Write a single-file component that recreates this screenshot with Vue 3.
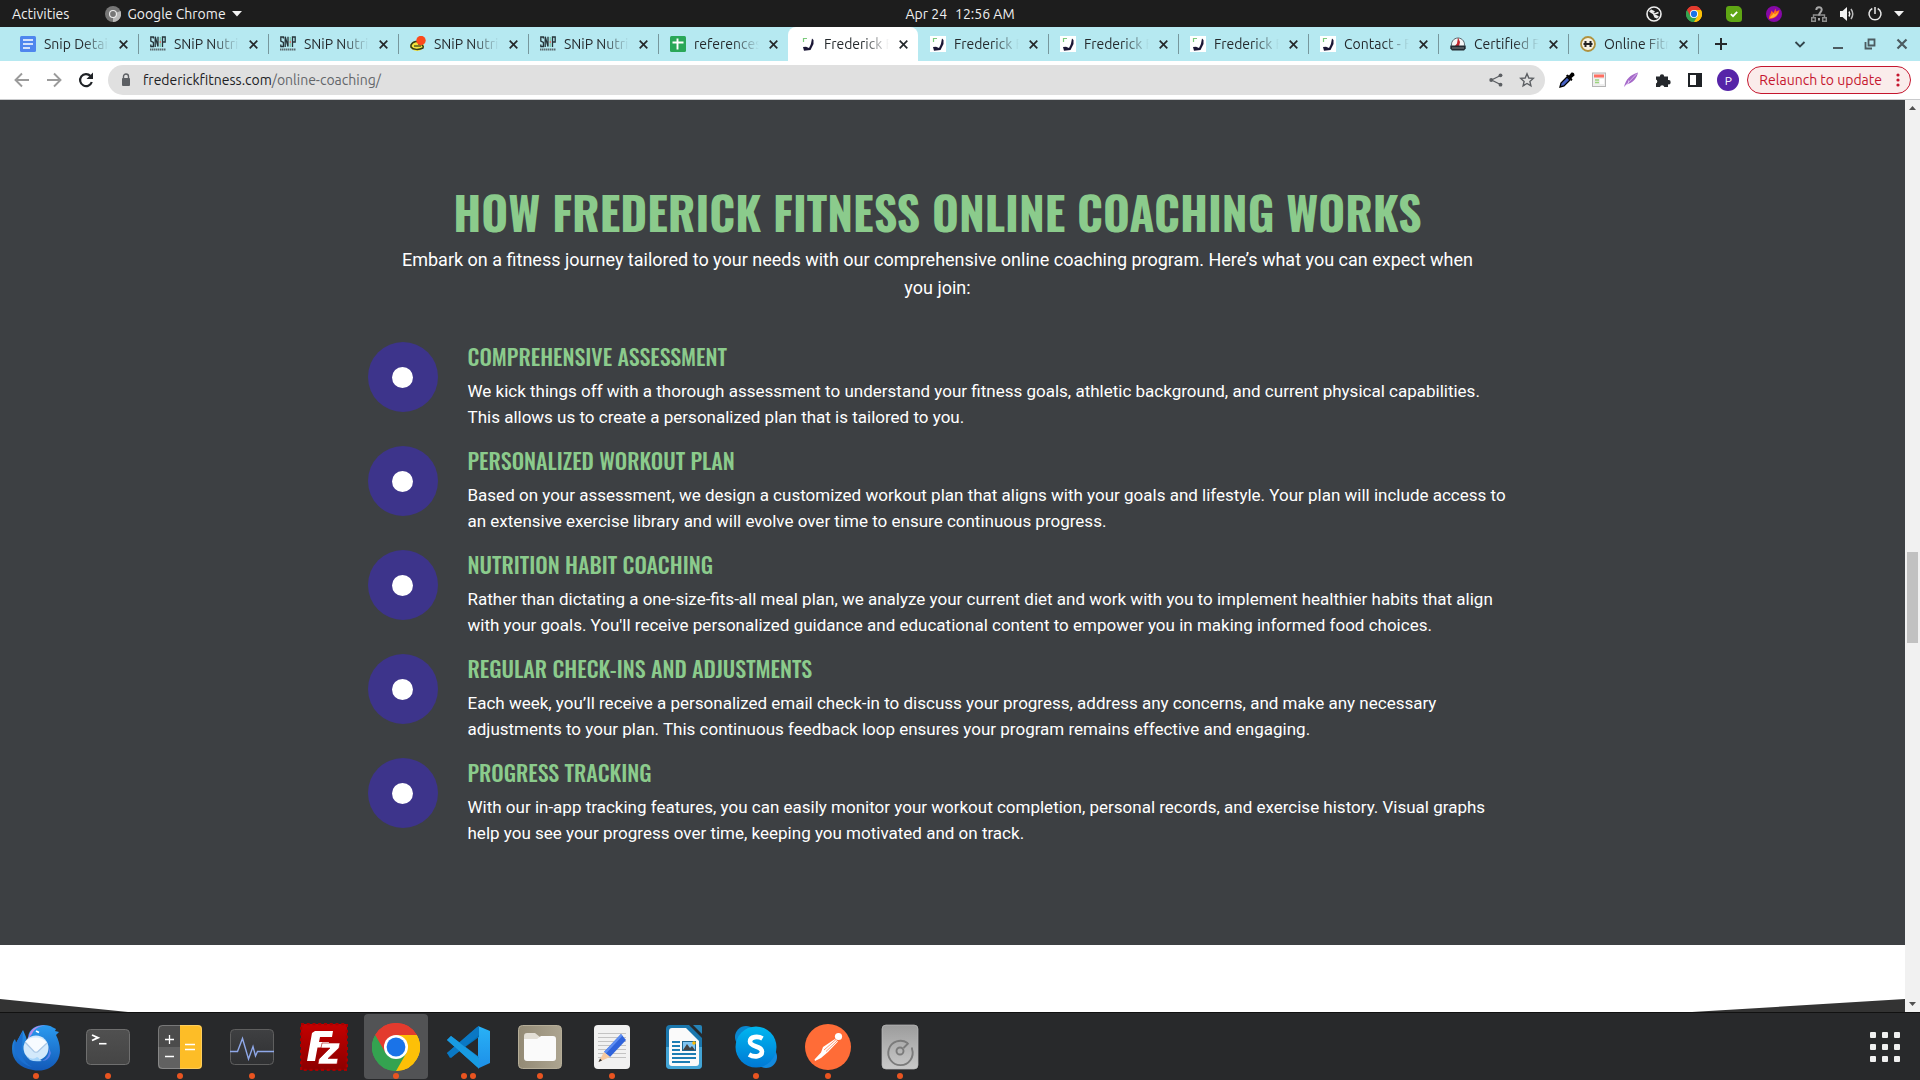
<script setup>
const tabs = [
  { t: 'Snip Details', k: 'docs' },
  { t: 'SNiP Nutrition', k: 'snip' },
  { t: 'SNiP Nutrition', k: 'snip' },
  { t: 'SNiP Nutrition', k: 'hat' },
  { t: 'SNiP Nutrition', k: 'snip' },
  { t: 'references', k: 'sheets' },
  { t: 'Frederick Fit', k: 'fred', on: true },
  { t: 'Frederick Fit', k: 'fred' },
  { t: 'Frederick Fit', k: 'fred' },
  { t: 'Frederick Fit', k: 'fred' },
  { t: 'Contact - Fre', k: 'fred' },
  { t: 'Certified Fit', k: 'cert' },
  { t: 'Online Fitness', k: 'gym' },
]
const items = [
  ['COMPREHENSIVE ASSESSMENT', 'We kick things off with a thorough assessment to understand your fitness goals, athletic background, and current physical capabilities. This allows us to create a personalized plan that is tailored to you.'],
  ['PERSONALIZED WORKOUT PLAN', 'Based on your assessment, we design a customized workout plan that aligns with your goals and lifestyle. Your plan will include access to an extensive exercise library and will evolve over time to ensure continuous progress.'],
  ['NUTRITION HABIT COACHING', "Rather than dictating a one-size-fits-all meal plan, we analyze your current diet and work with you to implement healthier habits that align with your goals. You'll receive personalized guidance and educational content to empower you in making informed food choices."],
  ['REGULAR CHECK-INS AND ADJUSTMENTS', 'Each week, you’ll receive a personalized email check-in to discuss your progress, address any concerns, and make any necessary adjustments to your plan. This continuous feedback loop ensures your program remains effective and engaging.'],
  ['PROGRESS TRACKING', 'With our in-app tracking features, you can easily monitor your workout completion, personal records, and exercise history. Visual graphs help you see your progress over time, keeping you motivated and on track.'],
]
const apps = [
  { k: 'bird', dots: 1, name: 'Thunderbird' },
  { k: 'term', dots: 1, name: 'Terminal' },
  { k: 'calc', dots: 1, name: 'Calculator' },
  { k: 'mon', dots: 1, name: 'System Monitor' },
  { k: 'fz', dots: 0, name: 'FileZilla' },
  { k: 'chrome', dots: 1, on: true, name: 'Google Chrome' },
  { k: 'code', dots: 2, name: 'Visual Studio Code' },
  { k: 'files', dots: 1, name: 'Files' },
  { k: 'edit', dots: 1, name: 'Text Editor' },
  { k: 'writer', dots: 0, name: 'LibreOffice Writer' },
  { k: 'skype', dots: 1, name: 'Skype' },
  { k: 'postman', dots: 1, name: 'Postman' },
  { k: 'disk', dots: 1, name: 'Disk' },
]
</script>

<template>
  <div class="desktop">
    <svg class="defs" width="0" height="0" aria-hidden="true">
      <defs>
        <linearGradient id="gBird" x1="0" y1="0" x2="0" y2="1"><stop offset="0" stop-color="#2b9bf0" /><stop offset="1" stop-color="#1259b8" /></linearGradient>
        <linearGradient id="gDark" x1="0" y1="0" x2="0" y2="1"><stop offset="0" stop-color="#505050" /><stop offset="1" stop-color="#454545" /></linearGradient>
        <linearGradient id="gMon" x1="0" y1="0" x2="0" y2="1"><stop offset="0" stop-color="#3f4042" /><stop offset="1" stop-color="#2f3032" /></linearGradient>
        <linearGradient id="gFz" x1="0" y1="0" x2="0" y2="1"><stop offset="0" stop-color="#c40000" /><stop offset="1" stop-color="#8c0000" /></linearGradient>
        <linearGradient id="gCode" x1="0" y1="0" x2="0" y2="1"><stop offset="0" stop-color="#29b2f6" /><stop offset="1" stop-color="#1d8fe8" /></linearGradient>
        <linearGradient id="gSky" x1="0" y1="0" x2="0" y2="1"><stop offset="0" stop-color="#00b7f0" /><stop offset="1" stop-color="#0078d4" /></linearGradient>
        <linearGradient id="gFile" x1="0" y1="0" x2="1" y2="0"><stop offset="0" stop-color="#938a75" /><stop offset="1" stop-color="#aca490" /></linearGradient>
        <linearGradient id="gDisk" x1="0" y1="0" x2="0" y2="1"><stop offset="0" stop-color="#9c9c9c" /><stop offset="1" stop-color="#c9c9c9" /></linearGradient>
        <symbol id="chrome" viewBox="0 0 48 48">
          <path d="M24 24 3.2 12A24 24 0 0 1 44.8 12z" fill="#e33b2e" />
          <path d="M24 24 44.8 12A24 24 0 0 1 24 48z" fill="#fdc007" />
          <path d="M24 24 24 48A24 24 0 0 1 3.2 12z" fill="#34a350" />
          <path d="M24 12H44.8A24 24 0 0 1 24 48L34.4 30z" fill="#fdc007" />
          <path d="M13.6 30 3.2 12A24 24 0 0 0 24 48L34.4 30z" fill="#34a350" />
          <path d="M24 12H44.8A24 24 0 0 0 3.2 12L13.6 30z" fill="#e33b2e" />
          <circle cx="24" cy="24" r="12" fill="#fff" /><circle cx="24" cy="24" r="9.4" fill="#1a73e8" />
        </symbol>
      </defs>
    </svg>

    <header class="topbar">
      <button class="activities">Activities</button>
      <button class="appmenu">
        <svg width="16" height="16" viewBox="0 0 16 16"><circle cx="8" cy="8" r="8" fill="#777" /><path d="M8 8 15.5 5A8 8 0 0 1 8 16z" fill="#b9b9b9" /><circle cx="8" cy="8" r="4" fill="#eee" /><circle cx="8" cy="8" r="2.9" fill="#777" /></svg>
        Google Chrome
        <svg width="10" height="6" viewBox="0 0 10 6"><path d="M0 0H10L5 5.500z" fill="#f2f2f2" /></svg>
      </button>
      <div class="clock"><span>Apr 24</span><span>12:56 AM</span></div>
      <div class="tray">
        <svg width="16" height="16" viewBox="0 0 16 16"><circle cx="8" cy="8" r="7" fill="none" stroke="#eee" stroke-width="1.600" /><path d="M3.500 5 7.500 7.500 9 11 11.500 12M4.500 4 8.500 6M7.500 8.500 12.500 6.500M8.500 9 12.500 11" stroke="#eee" stroke-width="1.500" fill="none" /></svg>
        <svg width="16" height="16"><use href="#chrome" /></svg>
        <svg width="16" height="16" viewBox="0 0 16 16"><path d="M3 0H11A5 5 0 0 1 16 5V13A3 3 0 0 1 13 16H5A5 5 0 0 1 0 11V3A3 3 0 0 1 3 0z" fill="#5fa614" /><path d="M4.800 8.200 7 10.200 11.200 5.800" stroke="#fff" stroke-width="1.700" fill="none" /></svg>
        <svg width="16" height="16" viewBox="0 0 16 16"><circle cx="8" cy="8" r="8" fill="#8708a8" /><path d="M3 13C3 9 5 8 5.500 4.500L7.500 7 9.500 2.500 10 5.500 13.500 4C13 9 9 13 3 13z" fill="#ff6a1a" /><path d="M4 12C5 9 7 9 7.500 7L9 8.500 12 6C11 10 8 12 4 12z" fill="#ffb62e" /></svg>
        <svg class="net" width="16" height="16" viewBox="0 0 16 16"><g fill="none" stroke="#8d8d8d" stroke-width="1.400"><path d="M.7 11.700H4.300V15.300H.7zM11.700 11.700H15.300V15.300H11.700zM2.500 11V9H13.500V11" /></g><path d="M5.300 4C5.300.3 10.700.3 10.700 3.800 10.700 6.300 8 6.300 8 9.500M8 12V14.500" fill="none" stroke="#a8a8a8" stroke-width="2" /></svg>
        <svg class="vol" width="16" height="16" viewBox="0 0 16 16"><path d="M1 5H3.500L8 1V15L3.500 11H1z" fill="#f2f2f2" /><path d="M10 5.500Q11.500 8 10 10.500" stroke="#f2f2f2" stroke-width="1.500" fill="none" /><path d="M12 3Q15.500 8 12 13" stroke="#bbb" stroke-width="1.500" fill="none" /></svg>
        <svg class="pow" width="16" height="16" viewBox="0 0 16 16"><path d="M5.300 2.500A6 6 0 1 0 10.700 2.500M8 1V8" stroke="#e8e8e8" stroke-width="1.500" fill="none" /></svg>
        <svg width="10" height="6" viewBox="0 0 10 6"><path d="M0 0H10L5 5.500z" fill="#f2f2f2" /></svg>
      </div>
    </header>

    <nav class="tabs">
      <div v-for="(tab, i) in tabs" :key="i" class="tab" :class="{ on: tab.on, plain: tabs[i + 1]?.on }">
        <svg v-if="tab.k === 'docs'" width="16" height="16" viewBox="0 0 16 16"><rect width="16" height="16" rx="1.500" fill="#4f86ee" /><path d="M3 4H13M3 8H13M3 12H10" stroke="#fff" stroke-width="1.700" /></svg>
        <svg v-else-if="tab.k === 'sheets'" width="16" height="16" viewBox="0 0 16 16"><rect width="16" height="16" rx="1.500" fill="#2aa758" /><path d="M2.500 6.500H13.500M7.500 2.500V13.500" stroke="#fff" stroke-width="1.900" /></svg>
        <svg v-else-if="tab.k === 'snip'" width="16" height="16" viewBox="0 0 16 16"><g fill="none" stroke="#26343a" stroke-width="1.300"><path d="M3.400 2.500V1H.8V5L3.400 6.500V10.500H.8V8.500M5.200 11V.8L8 10.500V.8M12.500 11V1H15.200V6H12.500" /></g><path d="M10.300 1V11" stroke="#73c9a7" stroke-width="1.200" /><path d="M10.300 5V7" stroke="#e36a6a" stroke-width="1.200" /><path d="M0 13.500H16" stroke="#5a6b70" stroke-width="2" stroke-dasharray="1.500 .5" /></svg>
        <svg v-else-if="tab.k === 'hat'" width="16" height="16" viewBox="0 0 16 16"><ellipse cx="7" cy="10" rx="7" ry="5" fill="#f4e33a" /><path d="M1 9C3 5 9 4 9 8 12 8 14 10 13 12 9 14 3 14 1 11z" fill="none" stroke="#2f3a1a" stroke-width="1.500" /><path d="M4 10H11" stroke="#2f3a1a" stroke-width="1.200" /><circle cx="11" cy="4.500" r="4.700" fill="#fc4a1c" /></svg>
        <svg v-else-if="tab.k === 'fred'" width="16" height="16" viewBox="0 0 16 16"><rect width="16" height="16" fill="#fff" /><path d="M3.500 6V2.500H7" fill="none" stroke="#7ccb7c" stroke-width="1.200" /><path d="M12 2.500 13.500 4V8L11.500 12 10.500 14 4 14.800 3 11 6 10.800 9 12 10.500 9 11 7.500z" fill="#1a1635" /></svg>
        <svg v-else-if="tab.k === 'cert'" width="16" height="16" viewBox="0 0 16 16"><path d="M2 11A6.500 6.500 0 1 1 14 11z" fill="#f4f6f6" stroke="#59666d" /><path d="M8 1.500 10 6 9 10.500H4.500L7 7.500z" fill="#c3252c" /><path d="M.3 9.500H15.700V12.500L14 14.500H2L.3 12.500z" fill="#222c33" /><path d="M2.500 12H13.500" stroke="#ddd" stroke-dasharray="1 1" /></svg>
        <svg v-else width="16" height="16" viewBox="0 0 16 16"><circle cx="8" cy="8" r="7" fill="#f6f3e4" stroke="#b0923e" stroke-width="1.800" /><path d="M3.500 8H12.500" stroke="#222" stroke-width="2" /><path d="M5.500 5V11M10.500 5V11" stroke="#222" stroke-width="2" /></svg>
        <a href="#" class="label">{{ tab.t }}</a>
        <button class="x" aria-label="Close tab"><svg width="9" height="9" viewBox="0 0 9 9"><path d="M.7.7 8.300 8.300M8.300.7.7 8.300" stroke="#25292c" stroke-width="1.700" /></svg></button>
      </div>
      <button class="plus" aria-label="New tab"><svg width="12" height="12" viewBox="0 0 12 12"><path d="M6 0V12M0 6H12" stroke="#25292c" stroke-width="2" /></svg></button>
      <div class="winbtns">
        <button aria-label="Search tabs"><svg width="12" height="12" viewBox="0 0 12 12"><path d="M1.500 4 6 8.500 10.500 4" fill="none" stroke="#33464c" stroke-width="1.800" /></svg></button>
        <button aria-label="Minimize"><svg width="12" height="12" viewBox="0 0 12 12"><path d="M1 10H11" stroke="#4c5b60" stroke-width="2" /></svg></button>
        <button aria-label="Restore"><svg width="12" height="12" viewBox="0 0 12 12"><path d="M4.500 1.500H10.500V7.500H4.500zM1.500 4V10.500H8" fill="none" stroke="#4c5b60" stroke-width="1.800" /></svg></button>
        <button aria-label="Close"><svg width="12" height="12" viewBox="0 0 12 12"><path d="M1.500 1.500 10.500 10.500M10.500 1.500 1.500 10.500" stroke="#4c5b60" stroke-width="2.200" /></svg></button>
      </div>
    </nav>

    <div class="toolbar">
      <button class="nav" aria-label="Back"><svg width="16" height="16" viewBox="0 0 16 16"><path d="M15 8H2M8 1.500 1.500 8 8 14.500" fill="none" stroke="#9b9b9b" stroke-width="1.900" /></svg></button>
      <button class="nav" aria-label="Forward"><svg width="16" height="16" viewBox="0 0 16 16"><path d="M1 8H14M8 1.500 14.500 8 8 14.500" fill="none" stroke="#9b9b9b" stroke-width="1.900" /></svg></button>
      <button class="nav" aria-label="Reload"><svg width="16" height="16" viewBox="0 0 16 16"><path d="M13.800 10A6 6 0 1 1 12.500 4" fill="none" stroke="#1f2226" stroke-width="2.200" /><path d="M15 .5V7H8.500z" fill="#1f2226" /></svg></button>
      <form class="omni" @submit.prevent>
        <svg class="lock" width="10" height="14" viewBox="0 0 10 14"><rect x="1" y="5" width="8" height="8" rx="1" fill="#5c5f63" /><path d="M2.500 6V3.500A2.500 2.500 0 0 1 7.500 3.500V6" fill="none" stroke="#5c5f63" stroke-width="1.400" /></svg>
        <a class="url" href="#">frederickfitness.com<span>/online-coaching/</span></a>
        <button aria-label="Share"><svg width="14" height="14" viewBox="0 0 14 14"><path d="M11.500 2.500 2.500 7 11.500 11.500" fill="none" stroke="#5c5f63" stroke-width="1.300" /><circle cx="11.500" cy="2.300" r="1.900" fill="#5c5f63" /><circle cx="2.200" cy="7" r="1.900" fill="#5c5f63" /><circle cx="11.500" cy="11.700" r="1.900" fill="#5c5f63" /></svg></button>
        <button aria-label="Bookmark"><svg width="16" height="16" viewBox="0 0 16 16"><path d="M8 1.800 9.800 6 14.300 6.400 10.900 9.400 11.900 13.800 8 11.500 4.100 13.800 5.100 9.400 1.700 6.400 6.200 6z" fill="none" stroke="#5c5f63" stroke-width="1.400" /></svg></button>
      </form>
      <div class="exts">
        <svg width="16" height="16" viewBox="0 0 16 16"><path d="M1 15 2 11 8 5 11 8 5 14z" fill="#4661c4" stroke="#000" stroke-width="1.300" /><path d="M7 3.500 8.500 2.500 10 3.500 12.500.5Q15.500 0 15.500 3.500L12.500 6 13.500 7.500 12.500 9z" fill="#000" /></svg>
        <svg width="16" height="16" viewBox="0 0 16 16"><rect x="1.500" y="1" width="13" height="13.500" fill="#eee" stroke="#b4b4b4" /><path d="M3 4H13" stroke="#ff6f61" stroke-width="3" /><path d="M4 8H8M4 10.500H8" stroke="#9bd47c" stroke-width="1.300" /><path d="M9 7H13V12H9z" fill="#fff" /></svg>
        <svg width="16" height="16" viewBox="0 0 16 16"><path d="M1 15C3 7 7 3 15 .5 14 6 10 11 3.500 12.500z" fill="#a569c9" /><path d="M1 15 14 1.500M5.500 8.500V11.500" stroke="#e7cdf5" stroke-width=".8" /></svg>
        <svg width="16" height="16" viewBox="0 0 16 16"><path d="M1 4.500H4.800A2.200 2.200 0 1 1 9.200 4.500H13V8A2.200 2.200 0 1 1 13 12.300V15H9.300A2.200 2.200 0 0 0 5 15H1V11.500A2.200 2.200 0 0 0 1 7.500z" fill="#25282c" /></svg>
        <svg width="16" height="16" viewBox="0 0 16 16"><path d="M1 1H15V15H1zM3 3V13H9V3z" fill="#1f2226" fill-rule="evenodd" /></svg>
      </div>
      <button class="avatar">P</button>
      <button class="relaunch">Relaunch to update <svg width="4" height="14" viewBox="0 0 4 14"><circle cx="2" cy="2" r="1.600" fill="#c5162e" /><circle cx="2" cy="7" r="1.600" fill="#c5162e" /><circle cx="2" cy="12" r="1.600" fill="#c5162e" /></svg></button>
    </div>

    <div class="view">
      <main class="page">
        <section class="works">
          <div class="wrap">
            <h1>HOW FREDERICK FITNESS ONLINE COACHING WORKS</h1>
            <p class="lead">Embark on a fitness journey tailored to your needs with our comprehensive online coaching program. Here’s what you can expect when you join:</p>
            <ul>
              <li v-for="it in items" :key="it[0]">
                <span class="disc"><i></i></span>
                <div class="txt"><h2>{{ it[0] }}</h2><p>{{ it[1] }}</p></div>
              </li>
            </ul>
          </div>
        </section>
        <section class="next">
          <svg class="left" width="128" height="13" viewBox="0 0 128 13" preserveAspectRatio="none"><path d="M0 0 128 13H0z" fill="#333" /></svg>
          <svg class="right" width="213" height="13" viewBox="0 0 213 13" preserveAspectRatio="none"><path d="M0 13 213 0V13z" fill="#333" /></svg>
        </section>
      </main>
      <div class="scroll">
        <svg width="15" height="15" viewBox="0 0 15 15"><path d="M4 10H11L7.500 6z" fill="#505050" /></svg>
        <div class="track"><div class="thumb"></div></div>
        <svg width="15" height="15" viewBox="0 0 15 15"><path d="M4 5H11L7.500 9z" fill="#505050" /></svg>
      </div>
    </div>

    <footer class="dock">
      <button v-for="a in apps" :key="a.k" class="app" :class="{ on: a.on }" :aria-label="a.name">
        <svg v-if="a.k === 'bird'" width="48" height="48" viewBox="0 0 48 48">
          <path d="M16 14C17 6 24 2 32 2 36 2 39 3 40 4L44 6 43 8 47 9 44 12C48 20 50 30 45 38 40 46 30 49 21 47 8 45 0 37 0 26 0 21 1 18 3 16L4 20 11 7 14 14 15 18z" fill="url(#gBird)" />
          <path d="M17 13C18 6 25 2 33 2.500 26 3.500 22 6 20 11 18 13 16 17 14 19z" fill="#b48be8" />
          <path d="M3 17C0 28 6 40 20 44 10 38 8 30 10 22L11 8 4 20z" fill="#1b6fd0" />
          <circle cx="24" cy="25" r="12.500" fill="#d3e9fb" />
          <path d="M13 19C18 13 30 13 35 20L25 29Q24 30 22 29z" fill="#f7fbff" /><path d="M13 19 22 28.500Q24 30 26 28.500L35 20" fill="none" stroke="#a9c7e6" stroke-width="1.200" />
          <path d="M18 37Q22 39 30 38C26 36 28 35 25 34Q21 38 14 33z" fill="#a5d4fa" />
          <path d="M24 8 27 9.500" stroke="#fff" stroke-width="1.800" /><path d="M37 25Q38 35 30 38 37 38 39 30z" fill="#5d80e8" />
        </svg>
        <svg v-else-if="a.k === 'term'" width="48" height="48" viewBox="0 0 48 48"><rect x="2.500" y="6.500" width="43" height="35" rx="4" fill="url(#gDark)" stroke="#6f6f6f" /><path d="M8 12 14 14.700 8 17.500" fill="none" stroke="#fff" stroke-width="1.900" /><path d="M15 20.700H22.500" stroke="#fff" stroke-width="1.600" /></svg>
        <svg v-else-if="a.k === 'calc'" width="48" height="48" viewBox="0 0 48 48"><rect x="2" y="2" width="44" height="44" rx="4" fill="#4b4b4b" /><path d="M2 24H24V46H6A4 4 0 0 1 2 42z" fill="#616161" /><path d="M24 2H42A4 4 0 0 1 46 6V42A4 4 0 0 1 42 46H24z" fill="#fdbd27" /><rect x="2.500" y="2.500" width="43" height="43" rx="4" fill="none" stroke="#fff" stroke-opacity=".25" /><path d="M9 16.500H18M13.500 12V21M9 33.500H18M29 21.500H39M29 26.500H39" stroke="#fff" stroke-width="1.300" /></svg>
        <svg v-else-if="a.k === 'mon'" width="48" height="48" viewBox="0 0 48 48"><rect x="2.500" y="6.500" width="43" height="35" rx="4" fill="url(#gMon)" stroke="#5f5f5f" /><path d="M2 28.500H9.500L14.500 15.500 20.500 36 25 23.500 27.500 33 29.500 28.500H46" fill="none" stroke="#8fa8e8" stroke-width="1.400" /></svg>
        <svg v-else-if="a.k === 'fz'" width="48" height="48" viewBox="0 0 48 48"><rect x="1" y="1" width="46" height="46" fill="url(#gFz)" /><rect x="1" y="1" width="46" height="46" fill="none" stroke="#a80000" stroke-width="2.500" stroke-dasharray="3 2.750" /><path d="M15 8H33L32 14H20L19 19H29L28 24.500H17.500L15 38H7L12 10z" fill="#fff" /><path d="M22 20H40L39 25 28 35.500H38L37 41H18L19 36 30 25H21z" fill="#fff" stroke="#a60000" stroke-width=".6" /></svg>
        <svg v-else-if="a.k === 'chrome'" width="48" height="48"><use href="#chrome" /></svg>
        <svg v-else-if="a.k === 'code'" width="48" height="48" viewBox="0 0 48 48"><path d="M34 3 46 8V40L34 45.500z" fill="url(#gCode)" /><path d="M3 30 6 35 35 14V3z" fill="#0070b8" /><path d="M3 17 7 13 35 34V45.500L33 44z" fill="#1088d2" /><path d="M3 30 7 35 35 12V3L33 4z" fill="#0a78c4" /><path d="M3 17 7 13 35 35V45.500z" fill="#189be2" /></svg>
        <svg v-else-if="a.k === 'files'" width="48" height="48" viewBox="0 0 48 48"><rect x="2.500" y="2.500" width="43" height="43" rx="4" fill="url(#gFile)" stroke="#b5ad98" /><path d="M8 13A3 3 0 0 1 11 10H19L24 14H38V24H8z" fill="#e3dfd6" /><path d="M8 16H21L25 13H37A3 3 0 0 1 40 16V35A3 3 0 0 1 37 38H11A3 3 0 0 1 8 35z" fill="#fafafa" /></svg>
        <svg v-else-if="a.k === 'edit'" width="48" height="48" viewBox="0 0 48 48"><rect x="6" y="2" width="36" height="44" rx="4" fill="#f1f1f1" /><path d="M10 10.500H38M10 14.500H38M10 18.500H38M10 22.500H38M10 26.500H38M10 30.500H38M10 34.500H38" stroke="#c3c3c3" /><path d="M16 29 33 11 38 17 22 34z" fill="#2f63db" /><path d="M16 29 33 11 34.500 12.800 18 30.500z" fill="#5d8df2" /><path d="M16 29 22 34 10.500 39z" fill="#f6c9a0" /><path d="M12 35.500 14 37.500 10.500 39z" fill="#333" /></svg>
        <svg v-else-if="a.k === 'writer'" width="48" height="48" viewBox="0 0 48 48"><path d="M10 2H29L42 15V42A4 4 0 0 1 38 46H10A4 4 0 0 1 6 42V6A4 4 0 0 1 10 2z" fill="#1b77ad" /><path d="M6 24H42V42A4 4 0 0 1 38 46H10A4 4 0 0 1 6 42z" fill="#43a4d5" /><path d="M33 2H40A2 2 0 0 1 42 4V11z" fill="#2583b8" /><path d="M9 8A3 3 0 0 1 12 5H26L39 18V40A3 3 0 0 1 36 43H12A3 3 0 0 1 9 40z" fill="#fafafa" /><path d="M12 19H20M12 23H20M12 27H20M12 31H36M12 35H36M12 39H30" stroke="#1c7db4" stroke-width="2" /><rect x="22.500" y="18.500" width="13" height="9" fill="#7fc4f2" stroke="#1c6590" /><path d="M23 27 27 21 30 25 32 23 35 27z" fill="#444" /><circle cx="34" cy="20" r="1.800" fill="#fcb900" /></svg>
        <svg v-else-if="a.k === 'skype'" width="48" height="48" viewBox="0 0 48 48"><circle cx="14" cy="14" r="11" fill="#0a86cf" /><circle cx="34" cy="34" r="11" fill="#1389de" /><circle cx="24" cy="24" r="20.500" fill="url(#gSky)" /><path d="M30.500 15.500C26 12.800 18 13.500 18 18.500 18 24.500 30 22.500 30 28.500 30 34 22 34.500 17 31.500" fill="none" stroke="#fff" stroke-width="4.600" /></svg>
        <svg v-else-if="a.k === 'postman'" width="48" height="48" viewBox="0 0 48 48"><circle cx="24" cy="24" r="23" fill="#ff6c37" /><circle cx="34.500" cy="13.500" r="3.600" fill="#fff" /><path d="M31 16 34 18.500 24 29 17 35 11 38 10.500 36.500 17 29.500 19 24z" fill="#fff" /><path d="M20 27 32 16.500M22 28.500 33 18" stroke="#ff6c37" stroke-width=".7" /></svg>
        <svg v-else width="48" height="48" viewBox="0 0 48 48"><rect x="6" y="2" width="36" height="44" rx="4" fill="url(#gDisk)" stroke="#bbb" stroke-width=".7" /><path d="M32 19A12.200 12.200 0 1 0 36.500 25V23.500M28 24 33 19" fill="none" stroke="#7b7b7b" stroke-width="1.900" transform="translate(-.5 1)" /><circle cx="24" cy="28" r="3.500" fill="none" stroke="#7b7b7b" stroke-width="1.900" /></svg>
        <span class="dots"><i v-for="d in a.dots" :key="d"></i></span>
      </button>
      <button class="grid" aria-label="Show applications"><i v-for="n in 9" :key="n"></i></button>
    </footer>
  </div>
</template>

<style>
body { margin: 0; background: #3d4043; }
</style>

<style scoped>
* { box-sizing: border-box; }
.desktop { display: flex; flex-direction: column; min-height: 100vh; font-family: Ubuntu, "Noto Sans", sans-serif; font-size: 14px; }
.defs { position: absolute; }
button { border: 0; padding: 0; background: none; color: inherit; font: inherit; display: flex; align-items: center; justify-content: center; }
a { color: inherit; text-decoration: none; }
svg { flex: none; display: block; }
.topbar { display: flex; align-items: center; height: 27px; background: #1d1d1d; color: #f0f0f0; padding: 0 11px 0 12px; position: relative; }
.appmenu { margin-left: 36px; gap: 6px; }
.clock { position: absolute; left: 0; right: 0; display: flex; justify-content: center; gap: 8px; pointer-events: none; }
.tray { margin-left: auto; display: flex; align-items: center; gap: 24px; }
.tray .net { margin-left: 5px; }
.tray .vol { margin-left: -12px; }
.tray .pow { margin-left: -12px; }
.tray .pow + svg { margin-left: -13px; margin-right: 5px; }
.tabs { display: flex; align-items: stretch; height: 34px; padding-left: 8px; background: #b6e9f1; color: #25292c; }
.tab { position: relative; display: flex; align-items: center; width: 130px; padding: 0 10px 0 12px; }
.tab::after { content: ""; position: absolute; right: -1px; top: 7px; width: 1px; height: 20px; background: #77979d; }
.tab.on::after, .tab.plain::after { display: none; }
.tab.on { background: #fff; border-radius: 8px 8px 0 0; }
.label { flex: 1; min-width: 0; margin: 0 10px 0 8px; overflow: hidden; white-space: nowrap; mask-image: linear-gradient(90deg, #000 60%, transparent); }
.plus { width: 45px; }
.winbtns { margin-left: auto; display: flex; gap: 20px; padding-right: 12px; }
.winbtns button:first-child { margin-right: 6px; }
.toolbar { display: flex; align-items: center; height: 39px; padding: 0 9px 0 14px; background: #fff; border-bottom: 1px solid #c9cacc; }
.nav { margin-right: 16px; }
.omni { flex: 1; display: flex; align-items: center; gap: 16px; height: 30px; margin-left: -2px; padding: 0 10px 0 13px; border-radius: 15px; background: #e0e0e0; }
.lock { margin-right: -4px; }
.url { flex: 1; color: #202124; }
.url span { color: #63666a; }
.exts { display: flex; gap: 16px; margin: 0 14px; }
.avatar { width: 22px; height: 22px; border-radius: 50%; background: #5624a8; color: #fff; font-size: 12px; }
.relaunch { height: 28px; margin-left: 8px; padding: 0 10px 0 11px; gap: 14px; border: 1px solid #c5162e; border-radius: 14px; background: #faeceb; color: #c5162e; }
.view { flex: 1; display: flex; background: #fff; }
.page { flex: 1; display: flex; flex-direction: column; }
.works { background: #3d4043; color: #fff; padding: 84px 30px 83px 0; font-family: Roboto, sans-serif; }
.wrap { max-width: 1140px; margin: 0 auto; }
h1 { margin: 0; text-align: center; font: 700 46px/54px Oswald, "Liberation Sans Narrow", "Open Sans Condensed", "Roboto Condensed", sans-serif; color: #8bcb8c; }
.lead { margin: 8px auto 0; max-width: 1080px; text-align: center; font-size: 18px; line-height: 28px; }
ul { list-style: none; margin: 40px 0 0; padding: 0; }
li { display: flex; gap: 30px; min-height: 104px; }
.disc { display: flex; flex: none; align-items: center; justify-content: center; width: 70px; height: 70px; border-radius: 50%; background: #3d348b; }
.disc i { width: 21px; height: 21px; border-radius: 50%; background: #fff; }
h2 { margin: 0 0 8px; font: 500 22px/28px Oswald, "Liberation Sans Narrow", "Open Sans Condensed", "Roboto Condensed", sans-serif; color: #8bcb8c; }
.txt p { margin: 0; font-size: 17px; line-height: 26px; }
.next { flex: 1; min-height: 66px; display: flex; align-items: flex-end; justify-content: space-between; background: #fff; }
.scroll { width: 15px; display: flex; flex-direction: column; background: #f1f1f1; }
.track { flex: 1; display: flex; justify-content: center; padding-top: 437px; }
.thumb { width: 11px; height: 91px; background: #c1c1c1; }
.dock { display: flex; align-items: stretch; height: 68px; padding: 1px 20px 1px 4px; gap: 8px; background: #28292b; border-top: 1px solid #111; }
.app { position: relative; width: 64px; border-radius: 4px; }
.app.on { background: #525355; }
.dots { position: absolute; left: 0; right: 0; bottom: 0; height: 6px; display: flex; justify-content: center; gap: 3px; }
.dots i { width: 6px; height: 6px; border-radius: 50%; background: #e95420; }
.grid { margin-left: auto; display: grid; grid-template-columns: repeat(3, 6px); gap: 6px; align-content: center; }
.grid i { width: 6px; height: 6px; border-radius: 1px; background: #f0f0f0; }
</style>
